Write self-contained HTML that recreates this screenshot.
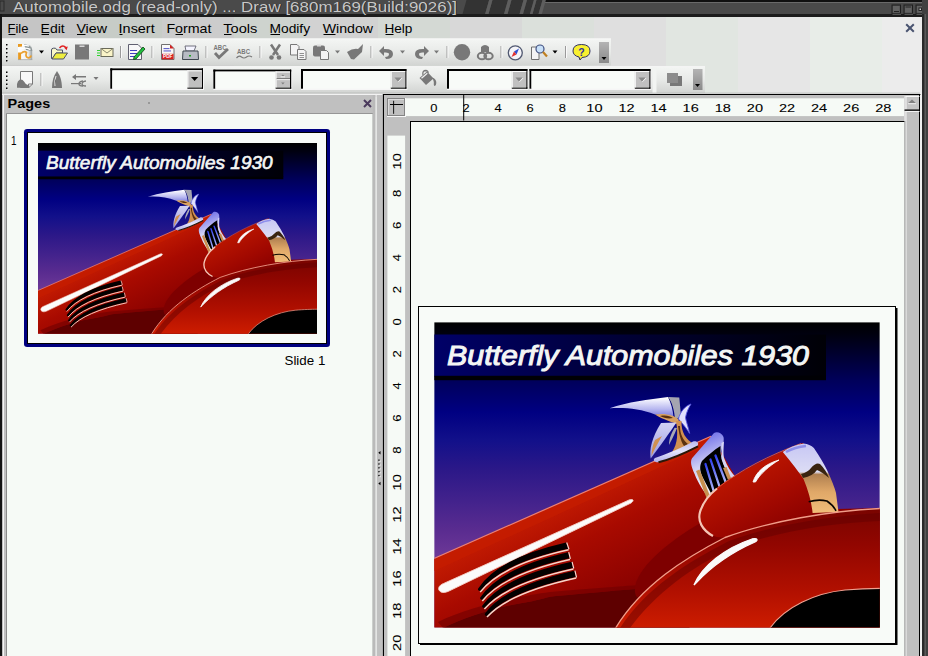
<!DOCTYPE html>
<html><head><meta charset="utf-8"><title>Automobile.odg - Draw</title>
<style>
html,body{margin:0;padding:0;width:928px;height:656px;overflow:hidden;background:#f4f8f4;}
svg{display:block;font-family:"Liberation Sans", sans-serif;}
</style></head><body>
<svg width="928" height="656" viewBox="0 0 928 656">
<defs>
<linearGradient id="tbg" x1="0" y1="0" x2="0" y2="1"><stop offset="0" stop-color="#f4f6f4"/><stop offset="0.5" stop-color="#e8eae8"/><stop offset="1" stop-color="#d2d4d2"/></linearGradient>
<linearGradient id="hdl" x1="0" y1="0" x2="0" y2="1"><stop offset="0" stop-color="#b4b4b4"/><stop offset="1" stop-color="#8a8a8a"/></linearGradient>
<linearGradient id="newdoc" x1="0" y1="0" x2="1" y2="0"><stop offset="0" stop-color="#ffffff"/><stop offset="0.7" stop-color="#eef0f0"/><stop offset="1" stop-color="#9aa0a0"/></linearGradient>
<clipPath id="imgclip"><rect x="434.2" y="322.2" width="445.59999999999997" height="305.40000000000003"/></clipPath>
<linearGradient id="sky" gradientUnits="userSpaceOnUse" x1="0" y1="322.2" x2="0" y2="627.6">
<stop offset="0" stop-color="#000000"/><stop offset="0.042" stop-color="#000010"/><stop offset="0.19" stop-color="#00005a"/><stop offset="0.295" stop-color="#000082"/><stop offset="0.386" stop-color="#12108a"/><stop offset="0.485" stop-color="#2c1888"/><stop offset="0.584" stop-color="#42228c"/><stop offset="0.682" stop-color="#5a2c90"/><stop offset="0.78" stop-color="#703a98"/><stop offset="1" stop-color="#7a40a0"/></linearGradient>
<linearGradient id="tbox" gradientUnits="userSpaceOnUse" x1="434.2" y1="0" x2="826" y2="0">
<stop offset="0" stop-color="#000068"/><stop offset="0.5" stop-color="#000034"/><stop offset="1" stop-color="#000006"/></linearGradient>
<linearGradient id="body" gradientUnits="userSpaceOnUse" x1="520" y1="520" x2="580" y2="640">
<stop offset="0" stop-color="#c41c02"/><stop offset="0.35" stop-color="#a80a00"/><stop offset="0.8" stop-color="#8c0200"/><stop offset="1" stop-color="#880000"/></linearGradient>
<linearGradient id="fender" gradientUnits="userSpaceOnUse" x1="0" y1="510" x2="0" y2="627">
<stop offset="0" stop-color="#7a0400"/><stop offset="0.3" stop-color="#920600"/><stop offset="0.7" stop-color="#b21000"/><stop offset="1" stop-color="#cc1c00"/></linearGradient>
<linearGradient id="pod" gradientUnits="userSpaceOnUse" x1="740" y1="460" x2="780" y2="540">
<stop offset="0" stop-color="#c01800"/><stop offset="0.6" stop-color="#a00800"/><stop offset="1" stop-color="#860000"/></linearGradient>
<linearGradient id="chrome" gradientUnits="userSpaceOnUse" x1="0" y1="445" x2="0" y2="512">
<stop offset="0" stop-color="#c8c8f4"/><stop offset="0.4" stop-color="#dcdcf4"/><stop offset="0.44" stop-color="#b08050"/><stop offset="0.7" stop-color="#e0a868"/><stop offset="1" stop-color="#f0bc78"/></linearGradient>
<linearGradient id="silver" gradientUnits="userSpaceOnUse" x1="0" y1="395" x2="0" y2="465">
<stop offset="0" stop-color="#f0f0ff"/><stop offset="0.5" stop-color="#c8c8f0"/><stop offset="1" stop-color="#9090e0"/></linearGradient>
<linearGradient id="streak" gradientUnits="userSpaceOnUse" x1="0" y1="398" x2="0" y2="418"><stop offset="0" stop-color="#ffffff"/><stop offset="0.2" stop-color="#e4e4fa"/><stop offset="0.55" stop-color="#b8b8f0"/><stop offset="1" stop-color="#7070d8"/></linearGradient>
<linearGradient id="basegr" gradientUnits="userSpaceOnUse" x1="0" y1="441" x2="0" y2="462"><stop offset="0" stop-color="#b8b8f0"/><stop offset="0.5" stop-color="#e4e4fa"/><stop offset="1" stop-color="#b0b0ec"/></linearGradient>
<linearGradient id="bluestripe" x1="0" y1="0" x2="0" y2="1"><stop offset="0" stop-color="#3040f0"/><stop offset="1" stop-color="#b8c0f8"/></linearGradient>
<linearGradient id="grill" gradientUnits="userSpaceOnUse" x1="700" y1="435" x2="725" y2="495">
<stop offset="0" stop-color="#6a6ae8"/><stop offset="0.45" stop-color="#d0d0f4"/><stop offset="0.8" stop-color="#f0f0fa"/><stop offset="1" stop-color="#e8e8f0"/></linearGradient>
</defs>
<rect x="0" y="17" width="18" height="80" fill="rgb(197,197,197)" />
<rect x="18" y="17" width="72" height="80" fill="rgb(197,197,197)" />
<rect x="90" y="17" width="72" height="80" fill="rgb(199,204,199)" />
<rect x="162" y="17" width="72" height="80" fill="rgb(204,204,204)" />
<rect x="234" y="17" width="72" height="80" fill="rgb(206,211,206)" />
<rect x="306" y="17" width="72" height="80" fill="rgb(210,210,210)" />
<rect x="378" y="17" width="72" height="80" fill="rgb(212,217,212)" />
<rect x="450" y="17" width="72" height="80" fill="rgb(216,216,216)" />
<rect x="522" y="17" width="72" height="80" fill="rgb(219,224,219)" />
<rect x="594" y="17" width="72" height="80" fill="rgb(223,223,223)" />
<rect x="666" y="17" width="72" height="80" fill="rgb(225,230,225)" />
<rect x="738" y="17" width="72" height="80" fill="rgb(230,230,230)" />
<rect x="810" y="17" width="72" height="80" fill="rgb(232,237,232)" />
<rect x="882" y="17" width="72" height="80" fill="rgb(236,236,236)" />
<rect x="0" y="0" width="928" height="14" fill="#4a4a4a" />
<rect x="0" y="14" width="928" height="3" fill="#1c1c1c" />
<rect x="543" y="0" width="385" height="2" fill="#101010" />
<rect x="543" y="2" width="385" height="1" fill="#6a6a6a" />
<polygon points="466.5,0 489.1,0 485.1,14 462.5,14" fill="#333333"/>
<polygon points="492.5,0 508.0,0 504.0,14 488.5,14" fill="#333333"/>
<polygon points="511.5,0 523.5,0 519.5,14 507.5,14" fill="#333333"/>
<polygon points="527.0,0 533.9,0 529.9,14 523.0,14" fill="#333333"/>
<polygon points="536.5,0 542.5,0 538.5,14 532.5,14" fill="#333333"/>
<polygon points="489.1,0 492.5,0 488.5,14 485.1,14" fill="#5e5e5e"/>
<polygon points="508.0,0 511.5,0 507.5,14 504.0,14" fill="#5e5e5e"/>
<polygon points="523.5,0 527.0,0 523.0,14 519.5,14" fill="#5e5e5e"/>
<polygon points="533.9,0 536.5,0 532.5,14 529.9,14" fill="#5e5e5e"/>
<polygon points="542.5,0 545.9,0 541.9,14 538.5,14" fill="#5e5e5e"/>
<rect x="0" y="1" width="4" height="10" fill="none" stroke="#2a2a2a" stroke-width="1"/>
<text x="13.7" y="12.4" font-size="14" fill="#202020" font-weight="normal" font-style="normal" text-anchor="start" textLength="444" lengthAdjust="spacingAndGlyphs" >Automobile.odg (read-only) ... Draw [680m169(Build:9026)]</text>
<text x="13" y="11.7" font-size="14" fill="#c8c8c8" font-weight="normal" font-style="normal" text-anchor="start" textLength="444" lengthAdjust="spacingAndGlyphs" >Automobile.odg (read-only) ... Draw [680m169(Build:9026)]</text>
<rect x="892" y="5" width="8.5" height="8.5" fill="#4e4e4e" stroke="#1e1e1e" stroke-width="1"/>
<rect x="893" y="6" width="6.5" height="6.5" fill="#626262" />
<rect x="892.5" y="13.8" width="8.5" height="0.8" fill="#7a7a7a" />
<rect x="894" y="11" width="5" height="1" fill="#222" />
<rect x="904" y="5" width="8.5" height="8.5" fill="#4e4e4e" stroke="#1e1e1e" stroke-width="1"/>
<rect x="905" y="6" width="6.5" height="6.5" fill="#626262" />
<rect x="904.5" y="13.8" width="8.5" height="0.8" fill="#7a7a7a" />
<rect x="905.5" y="6.5" width="5.5" height="1" fill="#222" />
<rect x="916" y="5" width="8.5" height="8.5" fill="#4e4e4e" stroke="#1e1e1e" stroke-width="1"/>
<rect x="917" y="6" width="6.5" height="6.5" fill="#626262" />
<rect x="916.5" y="13.8" width="8.5" height="0.8" fill="#7a7a7a" />
<rect x="918.5" y="7.5" width="3.5" height="3.5" fill="#222" />
<rect x="919.5" y="8.5" width="1.5" height="1.5" fill="#ccc" />
<rect x="0" y="14" width="2" height="642" fill="#141414" />
<rect x="920" y="93" width="2" height="563" fill="#f0f0f0" />
<rect x="922" y="0" width="6" height="656" fill="#404040" />
<rect x="922" y="14" width="2.5" height="642" fill="#2a2a2a" />
<rect x="924.5" y="14" width="1.5" height="642" fill="#5a5a5a" />
<text x="7.5" y="32.5" font-size="12.2" fill="#000" font-weight="normal" font-style="normal" text-anchor="start" textLength="20.900000000000002" lengthAdjust="spacingAndGlyphs" >File</text>
<text x="40.6" y="32.5" font-size="12.2" fill="#000" font-weight="normal" font-style="normal" text-anchor="start" textLength="24.1" lengthAdjust="spacingAndGlyphs" >Edit</text>
<text x="76.4" y="32.5" font-size="12.2" fill="#000" font-weight="normal" font-style="normal" text-anchor="start" textLength="30.6" lengthAdjust="spacingAndGlyphs" >View</text>
<text x="118.60000000000001" y="32.5" font-size="12.2" fill="#000" font-weight="normal" font-style="normal" text-anchor="start" textLength="36.099999999999994" lengthAdjust="spacingAndGlyphs" >Insert</text>
<text x="166.4" y="32.5" font-size="12.2" fill="#000" font-weight="normal" font-style="normal" text-anchor="start" textLength="45.099999999999994" lengthAdjust="spacingAndGlyphs" >Format</text>
<text x="223.3" y="32.5" font-size="12.2" fill="#000" font-weight="normal" font-style="normal" text-anchor="start" textLength="34.099999999999994" lengthAdjust="spacingAndGlyphs" >Tools</text>
<text x="269.5" y="32.5" font-size="12.2" fill="#000" font-weight="normal" font-style="normal" text-anchor="start" textLength="40.599999999999994" lengthAdjust="spacingAndGlyphs" >Modify</text>
<text x="322.7" y="32.5" font-size="12.2" fill="#000" font-weight="normal" font-style="normal" text-anchor="start" textLength="50.4" lengthAdjust="spacingAndGlyphs" >Window</text>
<text x="384.4" y="32.5" font-size="12.2" fill="#000" font-weight="normal" font-style="normal" text-anchor="start" textLength="28.0" lengthAdjust="spacingAndGlyphs" >Help</text>
<rect x="8.5" y="34" width="7" height="1" fill="#000" />
<rect x="41.5" y="34" width="7.5" height="1" fill="#000" />
<rect x="77" y="34" width="8.5" height="1" fill="#000" />
<rect x="119.5" y="34" width="3" height="1" fill="#000" />
<rect x="175.5" y="34" width="7.5" height="1" fill="#000" />
<rect x="224" y="34" width="7.5" height="1" fill="#000" />
<rect x="270.5" y="34" width="9.5" height="1" fill="#000" />
<rect x="323.5" y="34" width="12" height="1" fill="#000" />
<rect x="385.5" y="34" width="8" height="1" fill="#000" />
<path d="M906.2,24.2 L913.8,31.8 M913.8,24.2 L906.2,31.8" stroke="#4a5470" stroke-width="2"/>
<rect x="2" y="38.5" width="609" height="27" fill="url(#tbg)" />
<rect x="2" y="38.5" width="609" height="1" fill="#f8f8f8" />
<rect x="2" y="66" width="703" height="27" fill="url(#tbg)" />
<rect x="2" y="66" width="703" height="1" fill="#f4f4f4" />
<rect x="2" y="93" width="918" height="2" fill="#e6e8e6" />
<rect x="7" y="44.8" width="1.2" height="1.2" fill="#fafafa" />
<rect x="6" y="44" width="1.5" height="1.5" fill="#000" />
<rect x="7" y="48.8" width="1.2" height="1.2" fill="#fafafa" />
<rect x="6" y="48" width="1.5" height="1.5" fill="#000" />
<rect x="7" y="52.8" width="1.2" height="1.2" fill="#fafafa" />
<rect x="6" y="52" width="1.5" height="1.5" fill="#000" />
<rect x="7" y="56.8" width="1.2" height="1.2" fill="#fafafa" />
<rect x="6" y="56" width="1.5" height="1.5" fill="#000" />
<rect x="7" y="60.8" width="1.2" height="1.2" fill="#fafafa" />
<rect x="6" y="60" width="1.5" height="1.5" fill="#000" />
<rect x="7" y="72.3" width="1.2" height="1.2" fill="#fafafa" />
<rect x="6" y="71.5" width="1.5" height="1.5" fill="#000" />
<rect x="7" y="76.3" width="1.2" height="1.2" fill="#fafafa" />
<rect x="6" y="75.5" width="1.5" height="1.5" fill="#000" />
<rect x="7" y="80.3" width="1.2" height="1.2" fill="#fafafa" />
<rect x="6" y="79.5" width="1.5" height="1.5" fill="#000" />
<rect x="7" y="84.3" width="1.2" height="1.2" fill="#fafafa" />
<rect x="6" y="83.5" width="1.5" height="1.5" fill="#000" />
<rect x="7" y="88.3" width="1.2" height="1.2" fill="#fafafa" />
<rect x="6" y="87.5" width="1.5" height="1.5" fill="#000" />
<path d="M18,44 L27,44 Q32,45 32.2,50 L32.2,60 L18,60 Z" fill="url(#newdoc)"/>
<path d="M24,44.2 Q30.5,44.5 32.2,50 L32.2,51 L26,50 Z" fill="#8a9494"/>
<path d="M19,46.5 Q24,44.5 29,46.2 M20,49 Q25,47 30.5,49.5" fill="none" stroke="#ffffff" stroke-width="1.4"/>
<path d="M18,44 L22,44 L22,46.5 L18,47 Z" fill="#e89a20"/>
<path d="M19.6,60 L19.6,52.5" stroke="#e89a20" stroke-width="3"/>
<path d="M21,53.5 Q24,50.5 26.5,52.5 Q25,57 28,57.8 Q30.5,58 31.2,55.5" fill="none" stroke="#eaa030" stroke-width="1.7"/>
<rect x="18" y="59.3" width="14.2" height="0.8" fill="#a8a8a8" />
<polygon points="39,50.5 44,50.5 41.5,53.5" fill="#000"/>
<path d="M51.5,58.5 L51.5,50 Q51.5,48.2 53.5,48.2 L55.5,48.2 L57,50 L62.5,50 L62.5,53 L56,53 L52.5,58.5 Z" fill="#f8f8c8" stroke="#4a5068" stroke-width="1"/>
<path d="M52,59 L56,53 L67.5,53 L63.5,59 Z" fill="#eeee40" stroke="#4a5068" stroke-width="1"/>
<path d="M59.5,48 Q62.5,44.5 66,47.5" fill="none" stroke="#e02020" stroke-width="1.5"/>
<polygon points="64,47.5 67.8,46.5 66.6,50.2" fill="#e02020"/>
<rect x="75" y="44.5" width="14" height="15" fill="#787878" />
<rect x="79.5" y="45.5" width="5" height="1.5" fill="#d8d8d8" />
<rect x="101" y="48.5" width="12" height="8" fill="#faf4c8" stroke="#6a6a5a" stroke-width="1"/>
<path d="M101,48.5 L107,53 L113,48.5" fill="none" stroke="#8a8a70" stroke-width="1"/>
<rect x="97" y="50" width="3" height="1" fill="#30d030" />
<rect x="97" y="52.5" width="3" height="1" fill="#30d030" />
<rect x="97" y="55" width="3" height="1" fill="#30d030" />
<rect x="120" y="46" width="1" height="12" fill="#9a9a9a" />
<rect x="121" y="46" width="1" height="12" fill="#fafafa" />
<path d="M128.5,44.5 L138,44.5 L141.5,48 L141.5,59.5 L128.5,59.5 Z" fill="#f8f8f8" stroke="#606070" stroke-width="1"/>
<rect x="130" y="50" width="7" height="1" fill="#4040c0" />
<rect x="130" y="53" width="7" height="1" fill="#4040c0" />
<rect x="130" y="56" width="7" height="1" fill="#4040c0" />
<path d="M134,57 L143,47 L145,49 L136,59 L133.5,59.5 Z" fill="#20c040" stroke="#104010" stroke-width="0.8"/>
<rect x="151.5" y="46" width="1" height="12" fill="#9a9a9a" />
<rect x="152.5" y="46" width="1" height="12" fill="#fafafa" />
<path d="M161.5,44.5 L170,44.5 L174,48.5 L174,59.5 L161.5,59.5 Z" fill="#f8f8f8" stroke="#707070" stroke-width="1"/>
<polygon points="170,44.5 174,48.5 170,48.5" fill="#d02020"/>
<rect x="162" y="53.8" width="11.5" height="5.5" fill="#d82020" />
<rect x="163.5" y="48.2" width="6" height="0.9" fill="#4040c0" />
<rect x="163.5" y="50.5" width="7.5" height="0.9" fill="#4040c0" />
<text x="163" y="58.3" font-size="5" fill="#ffffff" font-weight="bold" font-style="normal" text-anchor="start" textLength="9.5" lengthAdjust="spacingAndGlyphs" >PDF</text>
<path d="M185,46 L196,46 L194,51 L186,51 Z" fill="#f4f4ff" stroke="#505060" stroke-width="0.8"/>
<path d="M183,51 L198,51 L198.5,59.5 L182.5,59.5 Z" fill="#b8bcc4" stroke="#404850" stroke-width="1"/>
<rect x="189" y="55" width="2" height="1.5" fill="#20a020" />
<rect x="205.5" y="46" width="1" height="12" fill="#9a9a9a" />
<rect x="206.5" y="46" width="1" height="12" fill="#fafafa" />
<text x="213.5" y="49.5" font-size="6.5" fill="#787878" font-weight="bold" font-style="normal" text-anchor="start" textLength="13" lengthAdjust="spacingAndGlyphs" >ABC</text>
<path d="M215,53 L219,57.5 L228,49" fill="none" stroke="#787878" stroke-width="2.8"/>
<text x="237" y="53.5" font-size="6.5" fill="#787878" font-weight="bold" font-style="normal" text-anchor="start" textLength="13" lengthAdjust="spacingAndGlyphs" >ABC</text>
<path d="M236.5,58 Q239,55 241.5,57 T246.5,57 T252,57" fill="none" stroke="#787878" stroke-width="1.2"/>
<rect x="259.5" y="46" width="1" height="12" fill="#9a9a9a" />
<rect x="260.5" y="46" width="1" height="12" fill="#fafafa" />
<path d="M271,44.5 L278,55 M280,44.5 L273,55" stroke="#787878" stroke-width="2.5"/>
<circle cx="271.5" cy="57.5" r="2.3" fill="#787878"/><circle cx="279" cy="57.5" r="2.3" fill="#787878"/>
<path d="M290.5,44.5 L297,44.5 L299,46.5 L299,55 L290.5,55 Z" fill="#f4f4f4" stroke="#787878" stroke-width="1"/>
<path d="M297.5,49.5 L304,49.5 L306,51.5 L306,59.5 L297.5,59.5 Z" fill="#f4f4f4" stroke="#787878" stroke-width="1"/>
<rect x="299.5" y="53" width="4.5" height="0.8" fill="#787878" />
<rect x="299.5" y="55" width="4.5" height="0.8" fill="#787878" />
<rect x="299.5" y="57" width="4.5" height="0.8" fill="#787878" />
<rect x="313" y="45.5" width="12" height="11" rx="2" fill="#787878"/>
<rect x="317" y="44.5" width="4" height="2" fill="#dcdcdc" />
<path d="M320.5,50.5 L326.5,50.5 L328.5,52.5 L328.5,59.5 L320.5,59.5 Z" fill="#f4f4f4" stroke="#787878" stroke-width="1"/>
<polygon points="335,50.5 340,50.5 337.5,53.5" fill="#787878"/>
<path d="M347,52 Q353,48 358,49 L363,44 L362,52 L354,59.5 L351,59 Z" fill="#787878"/>
<rect x="370.5" y="46" width="1" height="12" fill="#9a9a9a" />
<rect x="371.5" y="46" width="1" height="12" fill="#fafafa" />
<path d="M379,51 L384,46 L384,49 Q393,48.5 393,54 Q393,59 386,59 L385,57 Q389,57 389,54 Q389,52 384,52.5 L384,56 Z" fill="#787878"/>
<polygon points="400,50.5 405,50.5 402.5,53.5" fill="#787878"/>
<path d="M429,51 L424,46 L424,49 Q415,48.5 415,54 Q415,59 422,59 L423,57 Q419,57 419,54 Q419,52 424,52.5 L424,56 Z" fill="#787878"/>
<polygon points="434,50.5 439,50.5 436.5,53.5" fill="#787878"/>
<rect x="446.5" y="46" width="1" height="12" fill="#9a9a9a" />
<rect x="447.5" y="46" width="1" height="12" fill="#fafafa" />
<circle cx="462" cy="52.2" r="8.2" fill="#787878"/>
<path d="M481,52 L481,47 Q485,43 489,47 L489,52" fill="#787878"/>
<ellipse cx="482" cy="56" rx="4.2" ry="3.3" fill="none" stroke="#787878" stroke-width="2"/><ellipse cx="488.5" cy="56" rx="4.2" ry="3.3" fill="none" stroke="#787878" stroke-width="2"/>
<rect x="500.5" y="46" width="1" height="12" fill="#9a9a9a" />
<rect x="501.5" y="46" width="1" height="12" fill="#fafafa" />
<circle cx="515.3" cy="52.8" r="7" fill="#f4f4f8" stroke="#505870" stroke-width="1.3"/>
<polygon points="519,48.5 516.5,54.5 514,51.5" fill="#3050d0"/><polygon points="511.5,57 514,51.5 516.5,54.5" fill="#e03030"/>
<path d="M531.5,47 L539,47 L539,59.5 L531.5,59.5 Z" fill="#f4f4f4" stroke="#707070" stroke-width="1"/>
<circle cx="540" cy="49" r="4" fill="#c8e0f8" stroke="#405080" stroke-width="1.2"/>
<path d="M543,52 L547,56.5" stroke="#c08020" stroke-width="2.2"/>
<polygon points="552.5,50.5 557.5,50.5 555.0,53.5" fill="#000"/>
<rect x="565" y="46" width="1" height="12" fill="#9a9a9a" />
<rect x="566" y="46" width="1" height="12" fill="#fafafa" />
<path d="M581.5,44.5 Q590,44.5 590,51 Q590,57 582,57.5 L580,60 L579,57 Q573,55.5 573,51 Q573,44.5 581.5,44.5 Z" fill="#f8f030" stroke="#303060" stroke-width="1"/>
<text x="578.3" y="55.5" font-size="10.5" fill="#3030a0" font-weight="bold" font-style="normal" text-anchor="start" >?</text>
<rect x="599" y="42" width="10" height="21" fill="url(#hdl)" />
<polygon points="601.5,57 606.5,57 604.0,60" fill="#000"/>
<rect x="693" y="69" width="9.5" height="21" fill="url(#hdl)" />
<polygon points="695,84 700,84 697.5,87" fill="#000"/>
<path d="M20.5,71.5 L32.5,71.5 L32.5,84 L29,87.5 L20.5,87.5 Z" fill="#f8f8f8" stroke="#787878" stroke-width="1"/>
<path d="M17,87.8 L17,84 Q17.5,80.5 20,79.5 Q22.5,79 24,81.5 Q25.5,84.5 28,85 L29.5,85.5 L29.5,87.8 Z" fill="#787878"/>
<path d="M28.5,87.5 L28.5,84 L32.5,84" fill="none" stroke="#787878" stroke-width="1"/>
<rect x="40.5" y="73" width="1" height="13" fill="#9a9a9a" />
<rect x="41.5" y="73" width="1" height="13" fill="#fafafa" />
<path d="M57,71 Q62,78 62,88 L52,88 Q52,78 57,71 Z" fill="#787878"/>
<path d="M56,76 Q54,81 55,86" stroke="#e8e8e8" stroke-width="1"/>
<path d="M72,77 L76,74 L76,76 L86,76 L86,77.5 L76,77.5 L76,80 Z" fill="#787878"/>
<rect x="71" y="83" width="10" height="1.2" fill="#787878" />
<path d="M86,81 Q82,81.5 82,84 Q82,86 86,86" fill="none" stroke="#787878" stroke-width="1.3"/><path d="M83,81 Q79,81.5 79,84 Q79,86 83,86" fill="none" stroke="#787878" stroke-width="1.3"/>
<polygon points="93.5,77 98.5,77 96.0,80" fill="#787878"/>
<rect x="110.3" y="68.4" width="93.7" height="21.599999999999994" fill="#f6f6f6" />
<rect x="110.3" y="68.4" width="92.7" height="2" fill="#000" />
<rect x="110.3" y="68.4" width="2" height="20.299999999999997" fill="#000" />
<rect x="112.3" y="70.4" width="89.50000000000001" height="18.3" fill="#f8fbf8" />
<rect x="201.8" y="68.4" width="1.2" height="20.299999999999997" fill="#000" />
<rect x="187.4" y="87.4" width="15.599999999999994" height="1.3" fill="#000" />
<rect x="187.4" y="70.4" width="14.400000000000006" height="17.0" fill="#c0c0c0" />
<rect x="187.4" y="70.4" width="14.400000000000006" height="1" fill="#fafafa" />
<rect x="187.4" y="70.4" width="1" height="17.0" fill="#fafafa" />
<polygon points="191.0,77.0 198.20000000000002,77.0 194.6,81.0" fill="#000"/>
<rect x="213.4" y="69.6" width="78.79999999999998" height="20.400000000000006" fill="#f6f6f6" />
<rect x="213.4" y="69.6" width="77.79999999999998" height="2" fill="#000" />
<rect x="213.4" y="69.6" width="2" height="19.10000000000001" fill="#000" />
<rect x="215.4" y="71.6" width="74.6" height="17.100000000000012" fill="#f8fbf8" />
<rect x="290" y="69.6" width="1.2" height="19.10000000000001" fill="#000" />
<rect x="275.6" y="87.4" width="15.599999999999966" height="1.3" fill="#000" />
<rect x="275.6" y="71.6" width="14.399999999999977" height="15.800000000000011" fill="#c0c0c0" />
<rect x="275.6" y="71.6" width="14.399999999999977" height="1" fill="#fafafa" />
<rect x="275.6" y="71.6" width="1" height="15.800000000000011" fill="#fafafa" />
<rect x="276.6" y="78.3" width="13.399999999999977" height="0.9" fill="#606060" />
<rect x="276.6" y="79.19999999999999" width="13.399999999999977" height="0.9" fill="#fafafa" />
<polygon points="281.1,76.19999999999999 284.6,76.19999999999999 282.85,74.39999999999999" fill="#808080"/>
<rect x="280.6" y="76.39999999999999" width="4.5" height="0.9" fill="#fafafa" />
<polygon points="281.1,82.6 284.6,82.6 282.85,84.39999999999999" fill="#808080"/>
<rect x="301" y="69" width="106.39999999999998" height="21" fill="#f6f6f6" />
<rect x="301" y="69" width="105.39999999999998" height="2" fill="#000" />
<rect x="301" y="69" width="2" height="19.700000000000003" fill="#000" />
<rect x="303" y="71" width="102.19999999999999" height="17.700000000000006" fill="#f8fbf8" />
<rect x="405.2" y="69" width="1.2" height="19.700000000000003" fill="#000" />
<rect x="390.8" y="87.4" width="15.599999999999966" height="1.3" fill="#000" />
<rect x="390.8" y="71" width="14.399999999999977" height="16.400000000000006" fill="#c0c0c0" />
<rect x="390.8" y="71" width="14.399999999999977" height="1" fill="#fafafa" />
<rect x="390.8" y="71" width="1" height="16.400000000000006" fill="#fafafa" />
<polygon points="394.40000000000003,77.6 401.6,77.6 398.0,81.6" fill="#888"/>
<path d="M398.40000000000003,81.8 L402.0,78.1" fill="none" stroke="#f8f8f8" stroke-width="0.9"/>
<rect x="447" y="69" width="81.40000000000009" height="21" fill="#f6f6f6" />
<rect x="447" y="69" width="80.40000000000009" height="2" fill="#000" />
<rect x="447" y="69" width="2" height="19.700000000000003" fill="#000" />
<rect x="449" y="71" width="77.20000000000005" height="17.700000000000006" fill="#f8fbf8" />
<rect x="526.2" y="69" width="1.2" height="19.700000000000003" fill="#000" />
<rect x="511.80000000000007" y="87.4" width="15.600000000000023" height="1.3" fill="#000" />
<rect x="511.80000000000007" y="71" width="14.399999999999977" height="16.400000000000006" fill="#c0c0c0" />
<rect x="511.80000000000007" y="71" width="14.399999999999977" height="1" fill="#fafafa" />
<rect x="511.80000000000007" y="71" width="1" height="16.400000000000006" fill="#fafafa" />
<polygon points="515.4000000000001,77.6 522.6,77.6 519.0000000000001,81.6" fill="#888"/>
<path d="M519.4000000000001,81.8 L523.0000000000001,78.1" fill="none" stroke="#f8f8f8" stroke-width="0.9"/>
<rect x="529.5" y="69" width="121.90000000000009" height="21" fill="#f6f6f6" />
<rect x="529.5" y="69" width="120.90000000000009" height="2" fill="#000" />
<rect x="529.5" y="69" width="2" height="19.700000000000003" fill="#000" />
<rect x="531.5" y="71" width="117.70000000000005" height="17.700000000000006" fill="#f8fbf8" />
<rect x="649.2" y="69" width="1.2" height="19.700000000000003" fill="#000" />
<rect x="634.8000000000001" y="87.4" width="15.600000000000023" height="1.3" fill="#000" />
<rect x="634.8000000000001" y="71" width="14.399999999999977" height="16.400000000000006" fill="#c0c0c0" />
<rect x="634.8000000000001" y="71" width="14.399999999999977" height="1" fill="#fafafa" />
<rect x="634.8000000000001" y="71" width="1" height="16.400000000000006" fill="#fafafa" />
<polygon points="638.4000000000001,77.6 645.6,77.6 642.0000000000001,81.6" fill="#888"/>
<path d="M642.4000000000001,81.8 L646.0000000000001,78.1" fill="none" stroke="#f8f8f8" stroke-width="0.9"/>
<path d="M419.5,78 L427,71.5 L433.5,78.5 L426,85 Z" fill="#787878"/>
<path d="M421.5,78.3 L427.3,73.3" stroke="#f0f0f0" stroke-width="1.2"/>
<path d="M423,75 Q422,70.5 426,70.5 Q428.5,71 428,73" fill="none" stroke="#787878" stroke-width="1.3"/>
<path d="M432.5,77.5 Q436.5,79 436.3,83 Q436,86.5 434.5,86 Q433.5,85 433.8,82 Z" fill="#787878"/>
<rect x="652.5" y="67" width="4" height="26" fill="#f2f4f2" />
<rect x="670" y="76" width="12" height="10" fill="#787878" />
<rect x="667" y="73" width="11" height="10" fill="#8c8c8c" />
<rect x="2" y="92.7" width="918" height="1" fill="#b0b2b0" />
<rect x="2" y="93.7" width="918" height="1.5" fill="#f2f2f2" />
<rect x="2" y="95" width="373" height="561" fill="#c0c0c0" />
<rect x="3" y="95" width="1" height="561" fill="#f4f4f4" />
<text x="7.6" y="107.7" font-size="12.2" fill="#000" font-weight="bold" font-style="normal" text-anchor="start" textLength="42.6" lengthAdjust="spacingAndGlyphs" >Pages</text>
<rect x="148.5" y="102.5" width="1" height="1" fill="#202020" />
<path d="M364,100 L371,107 M371,100 L364,107" stroke="#4a3a5c" stroke-width="2"/>
<rect x="6" y="113.2" width="367" height="543" fill="#8a8a8a" />
<rect x="7" y="114" width="365.7" height="542" fill="#f6faf6" />
<rect x="24" y="129" width="306" height="218" rx="3.2" fill="#000080"/>
<rect x="27" y="132" width="300" height="212" fill="#000" />
<rect x="28" y="133" width="298" height="210" fill="#f8fbf8" />
<text x="11" y="144.5" font-size="12.2" fill="#000" font-weight="normal" font-style="normal" text-anchor="start" textLength="5.5" lengthAdjust="spacingAndGlyphs" >1</text>
<text x="284.5" y="364.6" font-size="12.2" fill="#000" font-weight="normal" font-style="normal" text-anchor="start" textLength="40.8" lengthAdjust="spacingAndGlyphs" >Slide 1</text>
<rect x="372.7" y="95" width="3" height="561" fill="#bababa" />
<rect x="375.7" y="95" width="1" height="561" fill="#f4f4f4" />
<rect x="376.7" y="95" width="6.3" height="561" fill="#c0c0c0" />
<polygon points="378.3,452.8 380.5,451.0 380.5,454.6" fill="#000"/>
<polygon points="378.3,483.5 380.5,481.7 380.5,485.3" fill="#000"/>
<rect x="379.3" y="460.5" width="1.3" height="1.3" fill="#fafafa" />
<rect x="378.3" y="459.5" width="1.3" height="1.3" fill="#000" />
<rect x="379.3" y="464.35" width="1.3" height="1.3" fill="#fafafa" />
<rect x="378.3" y="463.35" width="1.3" height="1.3" fill="#000" />
<rect x="379.3" y="468.2" width="1.3" height="1.3" fill="#fafafa" />
<rect x="378.3" y="467.2" width="1.3" height="1.3" fill="#000" />
<rect x="379.3" y="472.05" width="1.3" height="1.3" fill="#fafafa" />
<rect x="378.3" y="471.05" width="1.3" height="1.3" fill="#000" />
<rect x="379.3" y="475.9" width="1.3" height="1.3" fill="#fafafa" />
<rect x="378.3" y="474.9" width="1.3" height="1.3" fill="#000" />
<rect x="382.9" y="94" width="1.2" height="562" fill="#000" />
<rect x="382.9" y="94" width="537.5" height="1" fill="#000" />
<rect x="384" y="95" width="536" height="561" fill="#c0c0c0" />
<rect x="387" y="98" width="18" height="18" fill="#848484" />
<rect x="388" y="99" width="16" height="16" fill="#c0c0c0" />
<rect x="388" y="99" width="16" height="1" fill="#dcdcdc" />
<rect x="388" y="99" width="1" height="16" fill="#dcdcdc" />
<rect x="405" y="98" width="1" height="19" fill="#f8f8f8" />
<rect x="387" y="116" width="19" height="1" fill="#f8f8f8" />
<rect x="393.2" y="100.8" width="0.9" height="13" fill="#000" />
<rect x="390" y="104" width="13" height="1" fill="#000" />
<rect x="405.5" y="98.3" width="498.5" height="17.8" fill="#f6faf6" />
<text x="433.9" y="111.6" font-size="11.6" fill="#000" font-weight="normal" font-style="normal" text-anchor="middle" textLength="7.2" lengthAdjust="spacingAndGlyphs" stroke="#000" stroke-width="0.08">0</text>
<text x="466.0" y="111.6" font-size="11.6" fill="#000" font-weight="normal" font-style="normal" text-anchor="middle" textLength="7.2" lengthAdjust="spacingAndGlyphs" stroke="#000" stroke-width="0.08">2</text>
<text x="498.1" y="111.6" font-size="11.6" fill="#000" font-weight="normal" font-style="normal" text-anchor="middle" textLength="7.2" lengthAdjust="spacingAndGlyphs" stroke="#000" stroke-width="0.08">4</text>
<text x="530.2" y="111.6" font-size="11.6" fill="#000" font-weight="normal" font-style="normal" text-anchor="middle" textLength="7.2" lengthAdjust="spacingAndGlyphs" stroke="#000" stroke-width="0.08">6</text>
<text x="562.3" y="111.6" font-size="11.6" fill="#000" font-weight="normal" font-style="normal" text-anchor="middle" textLength="7.2" lengthAdjust="spacingAndGlyphs" stroke="#000" stroke-width="0.08">8</text>
<text x="594.4" y="111.6" font-size="11.6" fill="#000" font-weight="normal" font-style="normal" text-anchor="middle" textLength="16.2" lengthAdjust="spacingAndGlyphs" stroke="#000" stroke-width="0.08">10</text>
<text x="626.5" y="111.6" font-size="11.6" fill="#000" font-weight="normal" font-style="normal" text-anchor="middle" textLength="16.2" lengthAdjust="spacingAndGlyphs" stroke="#000" stroke-width="0.08">12</text>
<text x="658.6" y="111.6" font-size="11.6" fill="#000" font-weight="normal" font-style="normal" text-anchor="middle" textLength="16.2" lengthAdjust="spacingAndGlyphs" stroke="#000" stroke-width="0.08">14</text>
<text x="690.7" y="111.6" font-size="11.6" fill="#000" font-weight="normal" font-style="normal" text-anchor="middle" textLength="16.2" lengthAdjust="spacingAndGlyphs" stroke="#000" stroke-width="0.08">16</text>
<text x="722.8" y="111.6" font-size="11.6" fill="#000" font-weight="normal" font-style="normal" text-anchor="middle" textLength="16.2" lengthAdjust="spacingAndGlyphs" stroke="#000" stroke-width="0.08">18</text>
<text x="754.9" y="111.6" font-size="11.6" fill="#000" font-weight="normal" font-style="normal" text-anchor="middle" textLength="16.2" lengthAdjust="spacingAndGlyphs" stroke="#000" stroke-width="0.08">20</text>
<text x="787.0" y="111.6" font-size="11.6" fill="#000" font-weight="normal" font-style="normal" text-anchor="middle" textLength="16.2" lengthAdjust="spacingAndGlyphs" stroke="#000" stroke-width="0.08">22</text>
<text x="819.1" y="111.6" font-size="11.6" fill="#000" font-weight="normal" font-style="normal" text-anchor="middle" textLength="16.2" lengthAdjust="spacingAndGlyphs" stroke="#000" stroke-width="0.08">24</text>
<text x="851.2" y="111.6" font-size="11.6" fill="#000" font-weight="normal" font-style="normal" text-anchor="middle" textLength="16.2" lengthAdjust="spacingAndGlyphs" stroke="#000" stroke-width="0.08">26</text>
<text x="883.3" y="111.6" font-size="11.6" fill="#000" font-weight="normal" font-style="normal" text-anchor="middle" textLength="16.2" lengthAdjust="spacingAndGlyphs" stroke="#000" stroke-width="0.08">28</text>
<rect x="463.2" y="95" width="1" height="25.5" fill="#000" />
<rect x="387.4" y="135.6" width="17.7" height="521" fill="#f6faf6" />
<text x="0" y="0" font-size="11.6" fill="#000" stroke="#000" stroke-width="0.08" text-anchor="middle" textLength="16.2" lengthAdjust="spacingAndGlyphs" transform="translate(401.3,161.30) rotate(-90)">10</text>
<text x="0" y="0" font-size="11.6" fill="#000" stroke="#000" stroke-width="0.08" text-anchor="middle" textLength="7.2" lengthAdjust="spacingAndGlyphs" transform="translate(401.3,193.40) rotate(-90)">8</text>
<text x="0" y="0" font-size="11.6" fill="#000" stroke="#000" stroke-width="0.08" text-anchor="middle" textLength="7.2" lengthAdjust="spacingAndGlyphs" transform="translate(401.3,225.50) rotate(-90)">6</text>
<text x="0" y="0" font-size="11.6" fill="#000" stroke="#000" stroke-width="0.08" text-anchor="middle" textLength="7.2" lengthAdjust="spacingAndGlyphs" transform="translate(401.3,257.60) rotate(-90)">4</text>
<text x="0" y="0" font-size="11.6" fill="#000" stroke="#000" stroke-width="0.08" text-anchor="middle" textLength="7.2" lengthAdjust="spacingAndGlyphs" transform="translate(401.3,289.70) rotate(-90)">2</text>
<text x="0" y="0" font-size="11.6" fill="#000" stroke="#000" stroke-width="0.08" text-anchor="middle" textLength="7.2" lengthAdjust="spacingAndGlyphs" transform="translate(401.3,321.80) rotate(-90)">0</text>
<text x="0" y="0" font-size="11.6" fill="#000" stroke="#000" stroke-width="0.08" text-anchor="middle" textLength="7.2" lengthAdjust="spacingAndGlyphs" transform="translate(401.3,353.90) rotate(-90)">2</text>
<text x="0" y="0" font-size="11.6" fill="#000" stroke="#000" stroke-width="0.08" text-anchor="middle" textLength="7.2" lengthAdjust="spacingAndGlyphs" transform="translate(401.3,386.00) rotate(-90)">4</text>
<text x="0" y="0" font-size="11.6" fill="#000" stroke="#000" stroke-width="0.08" text-anchor="middle" textLength="7.2" lengthAdjust="spacingAndGlyphs" transform="translate(401.3,418.10) rotate(-90)">6</text>
<text x="0" y="0" font-size="11.6" fill="#000" stroke="#000" stroke-width="0.08" text-anchor="middle" textLength="7.2" lengthAdjust="spacingAndGlyphs" transform="translate(401.3,450.20) rotate(-90)">8</text>
<text x="0" y="0" font-size="11.6" fill="#000" stroke="#000" stroke-width="0.08" text-anchor="middle" textLength="16.2" lengthAdjust="spacingAndGlyphs" transform="translate(401.3,482.30) rotate(-90)">10</text>
<text x="0" y="0" font-size="11.6" fill="#000" stroke="#000" stroke-width="0.08" text-anchor="middle" textLength="16.2" lengthAdjust="spacingAndGlyphs" transform="translate(401.3,514.40) rotate(-90)">12</text>
<text x="0" y="0" font-size="11.6" fill="#000" stroke="#000" stroke-width="0.08" text-anchor="middle" textLength="16.2" lengthAdjust="spacingAndGlyphs" transform="translate(401.3,546.50) rotate(-90)">14</text>
<text x="0" y="0" font-size="11.6" fill="#000" stroke="#000" stroke-width="0.08" text-anchor="middle" textLength="16.2" lengthAdjust="spacingAndGlyphs" transform="translate(401.3,578.60) rotate(-90)">16</text>
<text x="0" y="0" font-size="11.6" fill="#000" stroke="#000" stroke-width="0.08" text-anchor="middle" textLength="16.2" lengthAdjust="spacingAndGlyphs" transform="translate(401.3,610.70) rotate(-90)">18</text>
<text x="0" y="0" font-size="11.6" fill="#000" stroke="#000" stroke-width="0.08" text-anchor="middle" textLength="16.2" lengthAdjust="spacingAndGlyphs" transform="translate(401.3,642.80) rotate(-90)">20</text>
<rect x="410" y="121" width="510" height="535" fill="#000" />
<rect x="411" y="122" width="493.5" height="534" fill="#f6faf6" />
<rect x="904.5" y="96" width="1" height="560" fill="#f4f4f4" />
<rect x="905.5" y="96" width="14" height="560" fill="#c0c0c0" />
<rect x="905.5" y="96" width="14" height="13.5" fill="#c4c4c4" />
<rect x="919" y="95" width="1" height="561" fill="#000" />
<rect x="905.5" y="96" width="14" height="1" fill="#f8f8f8" />
<rect x="905.5" y="96" width="1" height="13.5" fill="#f8f8f8" />
<polygon points="908,103.2 916,103.2 912,99.5" fill="#808080"/>
<rect x="908" y="103.2" width="8" height="1" fill="#f0f0f0" />
<rect x="904.5" y="109.5" width="15" height="1.3" fill="#000" />
<rect x="905.5" y="111" width="14" height="1" fill="#f4f4f4" />
<rect x="905.5" y="111" width="1" height="545" fill="#f4f4f4" />
<rect x="420" y="308" width="477.5" height="337" fill="#000" />
<rect x="418" y="306" width="478" height="338" fill="#000" />
<rect x="419" y="307" width="476" height="336" fill="#f8fbf8" />
<g clip-path="url(#imgclip)"><rect x="434.2" y="322.2" width="445.59999999999997" height="305.40000000000003" fill="url(#sky)"/>
<rect x="434.2" y="334.5" width="391.8" height="42" fill="url(#tbox)"/>
<rect x="434.2" y="375.8" width="391.8" height="4.4" fill="#000004"/>
<text x="447" y="364.6" font-size="28.5" font-style="italic" fill="#f4f6f4" stroke="#f4f6f4" stroke-width="1.0" textLength="362" lengthAdjust="spacingAndGlyphs">Butterfly Automobiles 1930</text>
<path d="M434.2,558.9 L712,436 L735,476 C755,464 780,452 803,443 L836,509 L880,508 L880,628 L434.2,628 Z" fill="url(#body)"/>
<path d="M434.2,558.9 L712,436 L716,441 L600,495 L434.2,571 Z" fill="#c41c00" opacity="0.85"/>
<path d="M434.5,558.3 L711,436.2" stroke="#f08070" stroke-width="1.2"/>
<path d="M443,628 C465,617 500,606 528,602 C540,600 546,597 556,596 C590,593 620,590 650,588 L690,628 Z" fill="#5e0000"/>
<path d="M443,628 C465,617 500,606 528,602 C540,600 546,597 556,596 C590,593 620,590 650,588 L655,584 C620,586 585,589 550,592 C520,596 470,606 438,622 Z" fill="#700000" opacity="0.6"/>
<path d="M636,596 C628,576 662,545 702,522 L765,520 L700,604 C672,610 645,606 636,596 Z" fill="#7e0000"/>
<path d="M441,592 C436.5,589.5 439,585 443.5,583.5 L629,500 C634,498.5 634,501 631,503 L449,591 C446,592.5 443,593 441,592 Z" fill="#fbfbfb" stroke="#f6d0c8" stroke-width="0.9"/>
<path d="M478.2,588.5 Q498.0,558.0 566.1,542.5 L568.1,548.7 Q501.0,563.5 480.2,591.0 Q477.2,590.5 478.2,588.5 Z" fill="#030000"/>
<path d="M568.6,549.8000000000001 Q501.5,564.8 480.2,592.1" fill="none" stroke="#f6d4c8" stroke-width="1.5"/>
<path d="M566.7,542.5 L569.0,549.3000000000001" stroke="#f4e0d8" stroke-width="1.1"/>
<path d="M480.3,597.4 Q500.1,567.7 568.1,552.2 L569.5,558.3 Q503.1,573.1 482.3,599.9 Q479.3,599.4 480.3,597.4 Z" fill="#030000"/>
<path d="M570.0,559.4 Q503.6,574.4 482.3,601.0" fill="none" stroke="#f6d4c8" stroke-width="1.5"/>
<path d="M568.7,552.2 L570.4,558.9" stroke="#f4e0d8" stroke-width="1.1"/>
<path d="M482.4,605.5 Q502.2,577.3 571.5,561.8 L572.9,567.9 Q505.2,582.7 484.4,608.0 Q481.4,607.5 482.4,605.5 Z" fill="#030000"/>
<path d="M573.4,569.0 Q505.7,584.0 484.4,609.1" fill="none" stroke="#f6d4c8" stroke-width="1.5"/>
<path d="M572.1,561.8 L573.8,568.5" stroke="#f4e0d8" stroke-width="1.1"/>
<path d="M485.0,613.5 Q504.8,586.2 574.3,570.7 L575.7,576.9 Q507.8,591.7 487.0,616.0 Q484.0,615.5 485.0,613.5 Z" fill="#030000"/>
<path d="M576.2,578.0 Q508.3,593.0 487.0,617.1" fill="none" stroke="#f6d4c8" stroke-width="1.5"/>
<path d="M574.9,570.7 L576.6,577.5" stroke="#f4e0d8" stroke-width="1.1"/>
<path d="M609.6,408.3 C628,402 648,399.5 668,397 C671,403 673,410 673.6,418 C668,417 660,415.5 655,414.6 C640,408.5 625,407.5 609.6,408.3 Z" fill="url(#streak)"/>
<path d="M668,397 L679.3,397.4 L681,416 L675,420 C674.5,410 672,402 668,397 Z" fill="#a4a4b0"/>
<path d="M655,414.6 C665,413 674,415 679,420 L677,424 C668,421 660,418 655,414.6 Z" fill="#d8a060"/>
<path d="M660,416 C666,415 670,416 673,418 C668,419 664,418 660,416 Z" fill="#5a3010"/>
<path d="M691,404 C685,406 680,412 678.5,419 C683,424 687,429 689.6,433.4 C688,426 686,421 685.5,417.5 C686.5,412 688.5,408 691,404 Z" fill="#e0e0fc" stroke="#5a5ae0" stroke-width="0.9"/>
<path d="M676,421 L681.5,421 C681,432 686,440 694,444 L672,452 C678,444 678,432 676,421 Z" fill="#d09050"/>
<path d="M678,426 L680,426 C680,434 683,440 688,444 L684,446 C680,440 679,432 678,426 Z" fill="#5a3010"/>
<path d="M661,423 L676.5,422.5 C670,432 660,446 650.7,458.6 C649,450 652,437 661,423 Z" fill="url(#silver)"/>
<path d="M655,440 L662,436 C658,443 654,450 651.5,456 C651.5,450 653,444 655,440 Z" fill="#d09050"/>
<path d="M674.7,427.7 L677,428 C674,436 671,441 669,444.9 C669,438 672,432 674.7,427.7 Z" fill="#a8a8b4"/>
<path d="M655,458 C666,454 682,448 693,441.5 C697,440.5 699.5,443 697.5,446 C686,453 670,460 660,462 C655,463 652,460.5 655,458 Z" fill="url(#basegr)"/>
<path d="M658.5,462.3 C671,459 686,452.5 698,446.3" fill="none" stroke="#2a1808" stroke-width="2"/>
<path d="M714,433 C717,431 722,433 723.5,437 C724.5,441 722,448 720.5,453 C724,462 728,470 734,477 L712,503 C704,492 698,483 694.6,474 C691,466 690,461 692.2,458 L714,433 Z" fill="url(#grill)"/>
<path d="M720.5,446 C714,450 707,456 702,461 C699,466 700,472 703,478 L714,499 L732,480 C726,471 722,462 720.5,453 Z" fill="#000"/>
<path d="M705.5,464 L714,492" stroke="url(#bluestripe)" stroke-width="2.3" stroke-linecap="round"/>
<path d="M710.5,459.5 L720,488" stroke="url(#bluestripe)" stroke-width="2.3" stroke-linecap="round"/>
<path d="M715.5,455.5 L726,483" stroke="url(#bluestripe)" stroke-width="2.3" stroke-linecap="round"/>
<path d="M721.5,443 L724,441.5 C723.5,450 723,455 724.5,459 C727,466 731,472 735,476.5 L732,480 C727,473 723.5,466 721.5,459 Z" fill="#d4d4f4"/>
<path d="M696,471 L699.5,469.5 L710,496 L707,499 Z" fill="#c89050"/>
<path d="M723,468 L726.5,467 L731,478 L728,480 Z" fill="#c89050"/>
<path d="M700,512 C704,497 718,485 735,476 C755,464 780,452 803,443 L836,509 C810,515 780,522 755,530 C735,537 720,540 712,535 C702,529 698,520 700,512 Z" fill="url(#pod)"/>
<path d="M713,536 C702,530 697.5,521 700,512 C703,502 710,494 717,488.5" fill="none" stroke="#f4c4b4" stroke-width="2.2"/>
<path d="M717,488.5 C740,470 770,455 801,443.5" fill="none" stroke="#e05a40" stroke-width="0.9"/>
<path d="M753,482 C756,472 765,464 779,460 C769,466 760,474 755.5,482 Z" fill="#fafafa" stroke="#fafafa" stroke-width="0.9"/>
<path d="M782.8,451.9 Q792,445 803.5,443.4 Q810,444 813.9,448 Q822,460 827,470 Q834,485 836,493 L838.5,512 L812.6,513 Q811,497 803.5,479.1 Q797,469 782.8,451.9 Z" fill="url(#chrome)"/>
<path d="M786,452 Q795,447 806,446" fill="none" stroke="#8080e8" stroke-width="2.5" opacity="0.8"/>
<path d="M801,474 Q808,472 811,468 Q816,462 820,464 Q826,470 829,478 Q822,472 817,470 Q813,476 803,478 Z" fill="#3a2410"/>
<path d="M808.7,501.8 Q818,499 826.9,501 Q833,505 836,510.8" fill="none" stroke="#0a0500" stroke-width="1.6"/>
<path d="M615.6,628 C642,585 685,558 725,537.5 C770,521 830,511 880,508.5 L880,628 Z" fill="url(#fender)"/>
<path d="M620,628 C646,588 688,562 728,541.5 C772,525 830,516 880,513 L880,521 C830,523 775,532 733,548 C692,566 655,594 630,628 Z" fill="#600000" opacity="0.45"/>
<path d="M615.6,628 C642,585 685,558 725,537.5 C770,521 830,511 880,508.5" fill="none" stroke="#f09c88" stroke-width="1.4"/>
<path d="M694,585 C702,566 725,548 752,539 C758,537.5 758,540.5 755,542 C730,553 710,568 696,583 Z" fill="#fafafa" stroke="#fafafa" stroke-width="1.3"/>
<path d="M770,628 C785,607 815,593 845,590 C860,588.8 870,588.5 880,588.4 L880,628 Z" fill="#000"/>
<path d="M770,628 C785,607 815,593 845,590 C860,588.8 870,588.5 880,588.4" fill="none" stroke="#f0a090" stroke-width="1.1"/></g>
<g transform="translate(38,143) scale(0.62612,0.62443) translate(-434.2,-322.2)"><g clip-path="url(#imgclip)"><rect x="434.2" y="322.2" width="445.59999999999997" height="305.40000000000003" fill="url(#sky)"/>
<rect x="434.2" y="334.5" width="391.8" height="42" fill="url(#tbox)"/>
<rect x="434.2" y="375.8" width="391.8" height="4.4" fill="#000004"/>
<text x="447" y="364.6" font-size="28.5" font-style="italic" fill="#f4f6f4" stroke="#f4f6f4" stroke-width="1.0" textLength="362" lengthAdjust="spacingAndGlyphs">Butterfly Automobiles 1930</text>
<path d="M434.2,558.9 L712,436 L735,476 C755,464 780,452 803,443 L836,509 L880,508 L880,628 L434.2,628 Z" fill="url(#body)"/>
<path d="M434.2,558.9 L712,436 L716,441 L600,495 L434.2,571 Z" fill="#c41c00" opacity="0.85"/>
<path d="M434.5,558.3 L711,436.2" stroke="#f08070" stroke-width="1.2"/>
<path d="M443,628 C465,617 500,606 528,602 C540,600 546,597 556,596 C590,593 620,590 650,588 L690,628 Z" fill="#5e0000"/>
<path d="M443,628 C465,617 500,606 528,602 C540,600 546,597 556,596 C590,593 620,590 650,588 L655,584 C620,586 585,589 550,592 C520,596 470,606 438,622 Z" fill="#700000" opacity="0.6"/>
<path d="M636,596 C628,576 662,545 702,522 L765,520 L700,604 C672,610 645,606 636,596 Z" fill="#7e0000"/>
<path d="M441,592 C436.5,589.5 439,585 443.5,583.5 L629,500 C634,498.5 634,501 631,503 L449,591 C446,592.5 443,593 441,592 Z" fill="#fbfbfb" stroke="#f6d0c8" stroke-width="0.9"/>
<path d="M478.2,588.5 Q498.0,558.0 566.1,542.5 L568.1,548.7 Q501.0,563.5 480.2,591.0 Q477.2,590.5 478.2,588.5 Z" fill="#030000"/>
<path d="M568.6,549.8000000000001 Q501.5,564.8 480.2,592.1" fill="none" stroke="#f6d4c8" stroke-width="1.5"/>
<path d="M566.7,542.5 L569.0,549.3000000000001" stroke="#f4e0d8" stroke-width="1.1"/>
<path d="M480.3,597.4 Q500.1,567.7 568.1,552.2 L569.5,558.3 Q503.1,573.1 482.3,599.9 Q479.3,599.4 480.3,597.4 Z" fill="#030000"/>
<path d="M570.0,559.4 Q503.6,574.4 482.3,601.0" fill="none" stroke="#f6d4c8" stroke-width="1.5"/>
<path d="M568.7,552.2 L570.4,558.9" stroke="#f4e0d8" stroke-width="1.1"/>
<path d="M482.4,605.5 Q502.2,577.3 571.5,561.8 L572.9,567.9 Q505.2,582.7 484.4,608.0 Q481.4,607.5 482.4,605.5 Z" fill="#030000"/>
<path d="M573.4,569.0 Q505.7,584.0 484.4,609.1" fill="none" stroke="#f6d4c8" stroke-width="1.5"/>
<path d="M572.1,561.8 L573.8,568.5" stroke="#f4e0d8" stroke-width="1.1"/>
<path d="M485.0,613.5 Q504.8,586.2 574.3,570.7 L575.7,576.9 Q507.8,591.7 487.0,616.0 Q484.0,615.5 485.0,613.5 Z" fill="#030000"/>
<path d="M576.2,578.0 Q508.3,593.0 487.0,617.1" fill="none" stroke="#f6d4c8" stroke-width="1.5"/>
<path d="M574.9,570.7 L576.6,577.5" stroke="#f4e0d8" stroke-width="1.1"/>
<path d="M609.6,408.3 C628,402 648,399.5 668,397 C671,403 673,410 673.6,418 C668,417 660,415.5 655,414.6 C640,408.5 625,407.5 609.6,408.3 Z" fill="url(#streak)"/>
<path d="M668,397 L679.3,397.4 L681,416 L675,420 C674.5,410 672,402 668,397 Z" fill="#a4a4b0"/>
<path d="M655,414.6 C665,413 674,415 679,420 L677,424 C668,421 660,418 655,414.6 Z" fill="#d8a060"/>
<path d="M660,416 C666,415 670,416 673,418 C668,419 664,418 660,416 Z" fill="#5a3010"/>
<path d="M691,404 C685,406 680,412 678.5,419 C683,424 687,429 689.6,433.4 C688,426 686,421 685.5,417.5 C686.5,412 688.5,408 691,404 Z" fill="#e0e0fc" stroke="#5a5ae0" stroke-width="0.9"/>
<path d="M676,421 L681.5,421 C681,432 686,440 694,444 L672,452 C678,444 678,432 676,421 Z" fill="#d09050"/>
<path d="M678,426 L680,426 C680,434 683,440 688,444 L684,446 C680,440 679,432 678,426 Z" fill="#5a3010"/>
<path d="M661,423 L676.5,422.5 C670,432 660,446 650.7,458.6 C649,450 652,437 661,423 Z" fill="url(#silver)"/>
<path d="M655,440 L662,436 C658,443 654,450 651.5,456 C651.5,450 653,444 655,440 Z" fill="#d09050"/>
<path d="M674.7,427.7 L677,428 C674,436 671,441 669,444.9 C669,438 672,432 674.7,427.7 Z" fill="#a8a8b4"/>
<path d="M655,458 C666,454 682,448 693,441.5 C697,440.5 699.5,443 697.5,446 C686,453 670,460 660,462 C655,463 652,460.5 655,458 Z" fill="url(#basegr)"/>
<path d="M658.5,462.3 C671,459 686,452.5 698,446.3" fill="none" stroke="#2a1808" stroke-width="2"/>
<path d="M714,433 C717,431 722,433 723.5,437 C724.5,441 722,448 720.5,453 C724,462 728,470 734,477 L712,503 C704,492 698,483 694.6,474 C691,466 690,461 692.2,458 L714,433 Z" fill="url(#grill)"/>
<path d="M720.5,446 C714,450 707,456 702,461 C699,466 700,472 703,478 L714,499 L732,480 C726,471 722,462 720.5,453 Z" fill="#000"/>
<path d="M705.5,464 L714,492" stroke="url(#bluestripe)" stroke-width="2.3" stroke-linecap="round"/>
<path d="M710.5,459.5 L720,488" stroke="url(#bluestripe)" stroke-width="2.3" stroke-linecap="round"/>
<path d="M715.5,455.5 L726,483" stroke="url(#bluestripe)" stroke-width="2.3" stroke-linecap="round"/>
<path d="M721.5,443 L724,441.5 C723.5,450 723,455 724.5,459 C727,466 731,472 735,476.5 L732,480 C727,473 723.5,466 721.5,459 Z" fill="#d4d4f4"/>
<path d="M696,471 L699.5,469.5 L710,496 L707,499 Z" fill="#c89050"/>
<path d="M723,468 L726.5,467 L731,478 L728,480 Z" fill="#c89050"/>
<path d="M700,512 C704,497 718,485 735,476 C755,464 780,452 803,443 L836,509 C810,515 780,522 755,530 C735,537 720,540 712,535 C702,529 698,520 700,512 Z" fill="url(#pod)"/>
<path d="M713,536 C702,530 697.5,521 700,512 C703,502 710,494 717,488.5" fill="none" stroke="#f4c4b4" stroke-width="2.2"/>
<path d="M717,488.5 C740,470 770,455 801,443.5" fill="none" stroke="#e05a40" stroke-width="0.9"/>
<path d="M753,482 C756,472 765,464 779,460 C769,466 760,474 755.5,482 Z" fill="#fafafa" stroke="#fafafa" stroke-width="0.9"/>
<path d="M782.8,451.9 Q792,445 803.5,443.4 Q810,444 813.9,448 Q822,460 827,470 Q834,485 836,493 L838.5,512 L812.6,513 Q811,497 803.5,479.1 Q797,469 782.8,451.9 Z" fill="url(#chrome)"/>
<path d="M786,452 Q795,447 806,446" fill="none" stroke="#8080e8" stroke-width="2.5" opacity="0.8"/>
<path d="M801,474 Q808,472 811,468 Q816,462 820,464 Q826,470 829,478 Q822,472 817,470 Q813,476 803,478 Z" fill="#3a2410"/>
<path d="M808.7,501.8 Q818,499 826.9,501 Q833,505 836,510.8" fill="none" stroke="#0a0500" stroke-width="1.6"/>
<path d="M615.6,628 C642,585 685,558 725,537.5 C770,521 830,511 880,508.5 L880,628 Z" fill="url(#fender)"/>
<path d="M620,628 C646,588 688,562 728,541.5 C772,525 830,516 880,513 L880,521 C830,523 775,532 733,548 C692,566 655,594 630,628 Z" fill="#600000" opacity="0.45"/>
<path d="M615.6,628 C642,585 685,558 725,537.5 C770,521 830,511 880,508.5" fill="none" stroke="#f09c88" stroke-width="1.4"/>
<path d="M694,585 C702,566 725,548 752,539 C758,537.5 758,540.5 755,542 C730,553 710,568 696,583 Z" fill="#fafafa" stroke="#fafafa" stroke-width="1.3"/>
<path d="M770,628 C785,607 815,593 845,590 C860,588.8 870,588.5 880,588.4 L880,628 Z" fill="#000"/>
<path d="M770,628 C785,607 815,593 845,590 C860,588.8 870,588.5 880,588.4" fill="none" stroke="#f0a090" stroke-width="1.1"/></g></g>
</svg>
</body></html>
